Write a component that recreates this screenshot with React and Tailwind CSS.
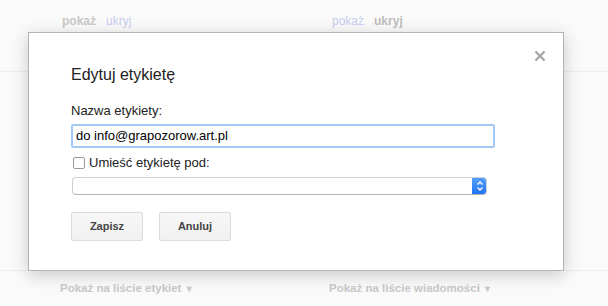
import React from "react";

export default function App() {
  return (
    <div className="relative w-[608px] h-[306px] overflow-hidden bg-[#fafafa] text-[13px]" style={{ fontFamily: '"Liberation Sans", Arial, sans-serif' }}>
      {/* background page */}
      <div className="flex flex-col h-full">
        <div className="h-[72px] border-b border-[#ededed] flex pt-[12px] text-[12px] font-bold">
          <div className="w-[330px] pl-[62px] flex gap-[10px]">
            <span className="text-[#c9c9c9]">pokaż</span>
            <span className="text-[#c7cdef] font-normal">ukryj</span>
          </div>
          <div className="flex gap-[10px] pl-[2px]">
            <span className="text-[#c7cdef] font-normal">pokaż</span>
            <span className="text-[#bdbdbd]">ukryj</span>
          </div>
        </div>
        <div className="flex-1" />
        <div className="h-[36px] border-t border-[#ededed] flex items-center pt-[1px] text-[11.5px] font-bold text-[#c8c8c8]">
          <div className="w-[329px] pl-[60px]">Pokaż na liście etykiet <span className="text-[9px]">▼</span></div>
          <div>Pokaż na liście wiadomości <span className="text-[9px]">▼</span></div>
        </div>
      </div>

      {/* dialog */}
      <div className="absolute left-[28px] top-[32px] w-[536px] h-[239px] bg-white border border-[#b5b5b5] shadow-[0_4px_16px_rgba(0,0,0,0.2)]">
        <button className="absolute right-[16px] top-[16px] w-[14px] h-[14px] flex items-center justify-center">
          <svg width="12" height="12" viewBox="0 0 12 12">
            <path d="M1.5 1.5 L10.5 10.5 M10.5 1.5 L1.5 10.5" stroke="#a3a3a3" strokeWidth="2.2" />
          </svg>
        </button>
        <div className="pl-[42px] pr-[70px] pt-[32px] flex flex-col">
          <div className="text-[16px] text-[#222] leading-[20px]">Edytuj etykietę</div>
          <div className="mt-[18px] text-[13px] text-[#222] leading-[16px]">Nazwa etykiety:</div>
          <div className="mt-[5px] w-[424px] h-[24px] border-2 border-[#a4c8f5] rounded-[2px] flex items-center pl-[3px] text-[13px] text-black">
            do info@grapozorow.art.pl
          </div>
          <label className="mt-[7px] flex items-center gap-[4px] text-[13px] text-[#222] leading-[16px]">
            <span className="ml-[2px] w-[12px] h-[12px] border border-[#9a9a9a] rounded-[2px] bg-white" />
            <span>Umieść etykietę pod:</span>
          </label>
          <div className="mt-[6px] ml-[1px] w-[415px] h-[18px] flex rounded-[4px] border border-[#cfcfcf] border-b-[#b4b4b4] bg-white overflow-hidden">
            <div className="flex-1" />
            <div className="w-[15px] bg-gradient-to-b from-[#58a2fb] to-[#1a6ff2] flex items-center justify-center -my-[1px] -mr-[1px] h-[18px] rounded-r-[4px]">
              <svg width="8" height="12" viewBox="0 0 8 12">
                <path d="M1.5 4.5 L4 2 L6.5 4.5 M1.5 7.5 L4 10 L6.5 7.5" stroke="white" strokeWidth="1.3" fill="none" />
              </svg>
            </div>
          </div>
          <div className="mt-[17px] flex gap-[16px]">
            <button className="w-[72px] h-[29px] rounded-[2px] border border-[#dcdcdc] bg-gradient-to-b from-[#f7f7f7] to-[#f0f0f0] text-[11px] font-bold text-[#444]">Zapisz</button>
            <button className="w-[72px] h-[29px] rounded-[2px] border border-[#dcdcdc] bg-gradient-to-b from-[#f7f7f7] to-[#f0f0f0] text-[11px] font-bold text-[#444]">Anuluj</button>
          </div>
        </div>
      </div>
    </div>
  );
}
